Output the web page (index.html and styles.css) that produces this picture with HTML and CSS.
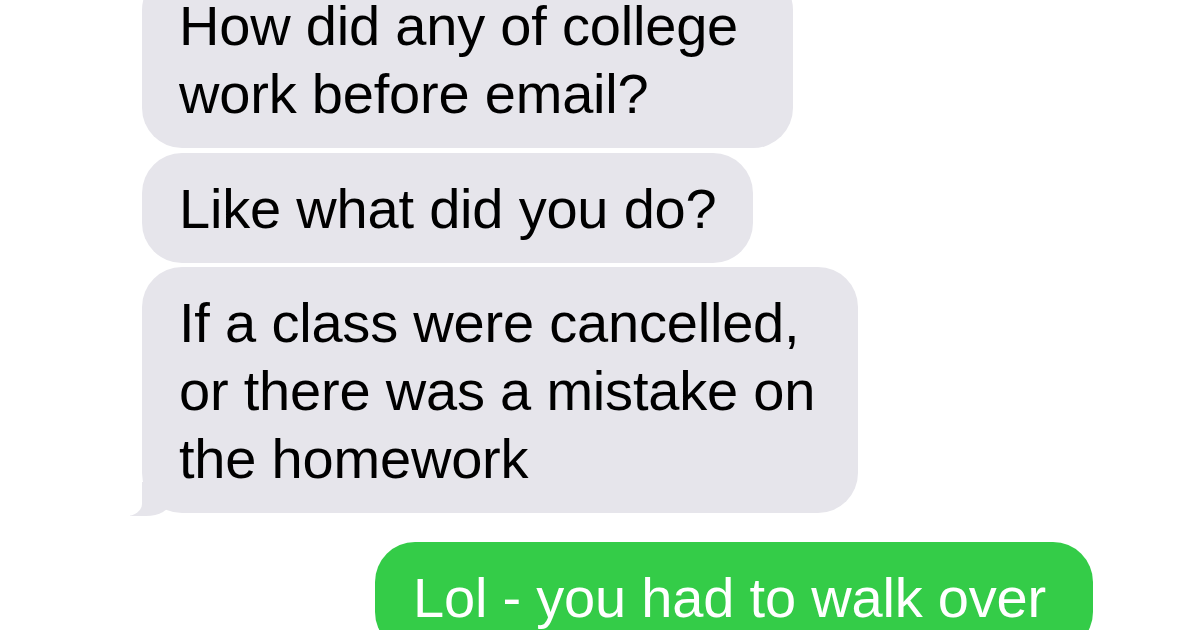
FILE: index.html
```html
<!DOCTYPE html>
<html lang="en">
<head>
<meta charset="utf-8">
<title>Messages</title>
<link rel="stylesheet" href="styles.css">
</head>
<body>
<main class="thread">
  <div class="bubble them b1">How did any of college<br>work before email?</div>
  <div class="bubble them b2">Like what did you do?</div>
  <div class="bubble them b3 tail">If a class were cancelled,<br>or there was a mistake on<br>the homework</div>
  <div class="bubble me b4">Lol - you had to walk over</div>
</main>
</body>
</html>
```
FILE: styles.css
```css
html, body {
  margin: 0;
  padding: 0;
  background: #ffffff;
  width: 1200px;
  height: 630px;
  overflow: hidden;
}

.thread {
  display: flex;
  flex-direction: column;
  align-items: flex-start;
  padding: 0 107px 0 142px;
  margin-top: -30px;
  font-family: "Liberation Sans", Arial, sans-serif;
  font-size: 56px;
  line-height: 68px;
  letter-spacing: -0.2px;
}

.bubble {
  position: relative;
  box-sizing: border-box;
  padding: 22px 20px 20px 37px;
  border-radius: 40px;
  white-space: nowrap;
}

.them {
  background: #e6e5eb;
  color: #000;
}

.me {
  background: #34cc48;
  color: #fff;
  align-self: flex-end;
  padding-left: 38px;
}

.b1 { width: 651px; margin-bottom: 5px; }
.b2 { width: 611px; margin-bottom: 4px; }
.b3 { width: 716px; margin-bottom: 29px; }
.b4 { width: 718px; }

.tail::before {
  content: "";
  position: absolute;
  left: -12px;
  bottom: -3px;
  width: 40px;
  height: 34px;
  background: #e6e5eb;
  border-bottom-right-radius: 24px 14px;
}

.tail::after {
  content: "";
  position: absolute;
  left: -44px;
  bottom: -3px;
  width: 44px;
  height: 36px;
  background: #ffffff;
  border-bottom-right-radius: 16px 12px;
}
```
